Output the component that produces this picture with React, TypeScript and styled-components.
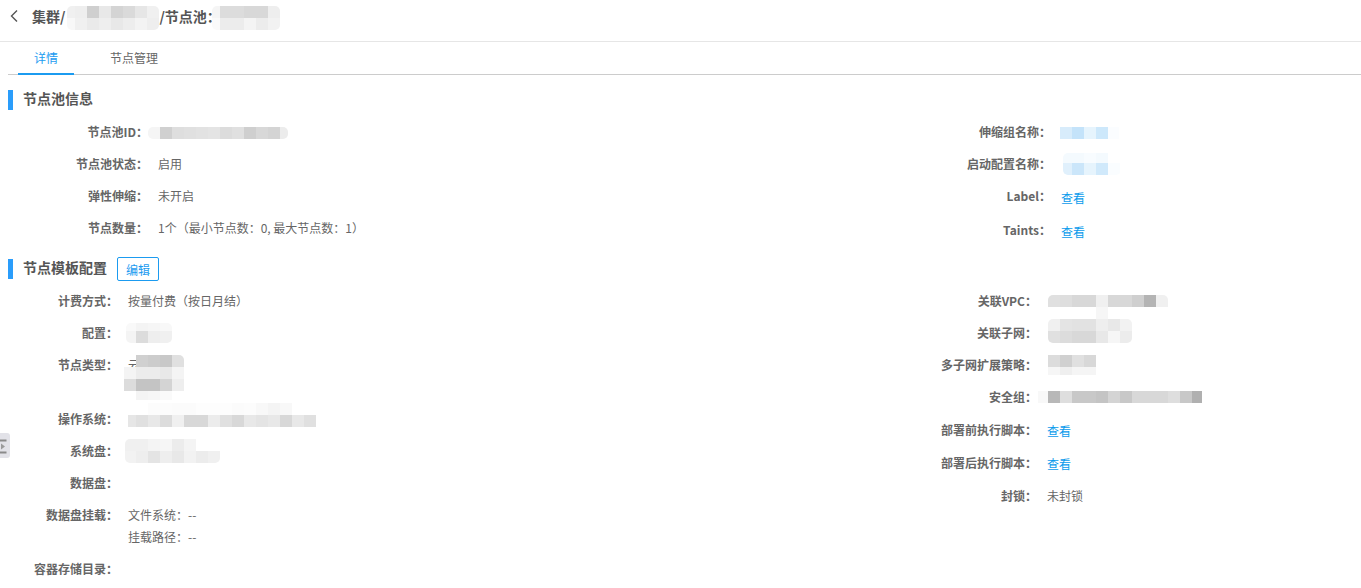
import { FC, ReactNode } from 'react';
import styled, { createGlobalStyle } from 'styled-components';

const GlobalStyle = createGlobalStyle`
  html, body {
    margin: 0;
    padding: 0;
    height: 100%;
    overflow: hidden;
    background: #fff;
  }
  body {
    font-family: "Noto Sans CJK SC", "Noto Sans", "Liberation Sans", sans-serif;
    font-size: 12px;
    color: #666;
  }
`;

type Blur = {
  x: number;
  y: number;
  w: number;
  h: number;
  offX?: number;
  offY?: number;
  flat?: boolean;
  rows: string[][];
};

const Mosaic: FC<Blur> = ({ x, y, w, h, offX = 0, offY = 0, flat, rows }) => (
  <MosaicBox $x={x} $y={y} $w={w} $h={h} $flat={flat}>
    <MosaicInner $offX={offX} $offY={offY}>
      {rows.map((row, i) => (
        <MosaicRow key={i}>
          {row.map((c, j) => (
            <MosaicCell key={j} $c={c} />
          ))}
        </MosaicRow>
      ))}
    </MosaicInner>
  </MosaicBox>
);

const Row: FC<{ label: string; width: number; height?: number; children?: ReactNode }> = ({
  label,
  width,
  height = 32,
  children,
}) => (
  <RowWrap $height={height}>
    <Label $width={width}>{label}：</Label>
    <Value>{children}</Value>
  </RowWrap>
);

const App: FC = () => {
  return (
    <Page>
      <GlobalStyle />
      <Header>
        <BackIcon width="10" height="14" viewBox="0 0 10 14">
          <path d="M8 1.5 2.5 7 8 12.5" fill="none" stroke="#555" strokeWidth="1.4" />
        </BackIcon>
        <Crumb>集群/</Crumb>
        <Hidden $width={94}>
          <Mosaic
            x={2}
            y={-4}
            w={92}
            h={24}
            offX={4}
            rows={[
              ['#f0f0f0', '#eeeeee', '#cfcfcf', '#e8e8e8', '#d4d4d4', '#dadada', '#e6e6e6', '#f0f0f0'],
              ['#f8f8f8', '#f0f0f0', '#eaeaea', '#eeeeee', '#e8e8e8', '#ededed', '#f3f3f3', '#eeeeee'],
            ]}
          />
        </Hidden>
        <Crumb>/节点池：</Crumb>
        <Hidden $width={68}>
          <Mosaic
            x={-9}
            y={-4}
            w={68}
            h={24}
            offX={4}
            rows={[
              ['#f5f5f5', '#dcdcdc', '#dcdcdc', '#d8d8d8', '#d8d8d8', '#eeeeee'],
              ['#fafafa', '#ececec', '#ececec', '#f4f4f4', '#ececec', '#f2f2f2'],
            ]}
          />
        </Hidden>
      </Header>

      <Tabs>
        <Tab $active>详情</Tab>
        <Tab>节点管理</Tab>
      </Tabs>

      <SectionTitle>
        <TitleText>节点池信息</TitleText>
      </SectionTitle>
      <Columns>
        <Column $width={900}>
          <Row label="节点池ID" width={148}>
            <Mosaic
              x={-10}
              y={6}
              w={140}
              h={12}
              rows={[['#f5f5f5', '#d0d0d0', '#dedede', '#e0e0e0', '#e2e2e2', '#e4e4e4', '#dcdcdc', '#e0e0e0', '#cfcfcf', '#d8d8d8', '#d4d4d4', '#ececec']]}
            />
          </Row>
          <Row label="节点池状态" width={148}>启用</Row>
          <Row label="弹性伸缩" width={148}>未开启</Row>
          <Row label="节点数量" width={148}>1个（最小节点数：0, 最大节点数：1）</Row>
        </Column>
        <Column>
          <Row label="伸缩组名称" width={151}>
            <Mosaic
              x={-1}
              y={6}
              w={59}
              h={12}
              flat
              rows={[['#d8ecfb', '#c4e3fa', '#e6f4fd', '#cde8fb', '#fbfdff']]}
            />
          </Row>
          <Row label="启动配置名称" width={151}>
            <Mosaic
              x={2}
              y={0}
              w={58}
              h={22}
              offX={3}
              offY={2}
              rows={[
                ['#f4fafe', '#f4fafe', '#f8fcff', '#f4fafe', '#ffffff'],
                ['#e0f0fc', '#cbe6fa', '#e6f4fd', '#d0e9fb', '#fafdff'],
              ]}
            />
          </Row>
          <Row label="Label" width={151} height={34}>
            <ViewLink>查看</ViewLink>
          </Row>
          <Row label="Taints" width={151} height={34}>
            <ViewLink>查看</ViewLink>
          </Row>
        </Column>
      </Columns>

      <SectionTitle $second>
        <TitleText>节点模板配置</TitleText>
        <EditButton>编辑</EditButton>
      </SectionTitle>
      <Columns>
        <Column $width={900}>
          <Row label="计费方式" width={118}>按量付费（按日月结）</Row>
          <Row label="配置" width={118}>
            <Mosaic
              x={-2}
              y={1}
              w={46}
              h={20}
              offX={2}
              offY={4}
              rows={[
                ['#f9f9f9', '#f4f4f4', '#f6f6f6', '#f8f8f8'],
                ['#f4f4f4', '#dcdcdc', '#eeeeee', '#f0f0f0'],
              ]}
            />
          </Row>
          <Row label="节点类型" width={118} height={54}>
            云
            <Mosaic
              x={-4}
              y={1}
              w={60}
              h={45}
              rows={[
                ['transparent', '#d0d0d0', '#cccccc', '#c8c8c8', '#e0e0e0'],
                ['#f4f4f4', '#ececec', '#ececec', '#e8e8e8', '#f4f4f4'],
                ['#dcdcdc', '#c4c4c4', '#c4c4c4', '#d4d4d4', '#eeeeee'],
                ['transparent', '#f4f4f4', '#f6f6f6', '#fafafa', 'transparent'],
              ]}
            />
          </Row>
          <Row label="操作系统" width={118}>
            <Mosaic
              x={0}
              y={-5}
              w={188}
              h={24}
              offX={4}
              flat
              rows={[
                ['transparent', 'transparent', '#fcfcfc', '#fcfcfc', '#fbfbfb', '#fbfbfb', '#fdfdfd', '#fdfdfd', '#fdfdfd', '#fbfbfb', '#fcfcfc', '#f8f8f8', '#f4f4f4', '#f8f8f8', 'transparent', 'transparent'],
                ['#e6e6e6', '#e0e0e0', '#e8e8e8', '#dcdcdc', '#f0f0f0', '#d8d8d8', '#d8d8d8', '#ececec', '#e0e0e0', '#d8d8d8', '#e8e8e8', '#e4e4e4', '#e8e8e8', '#d8d8d8', '#e8e8e8', '#e0e0e0'],
              ]}
            />
          </Row>
          <Row label="系统盘" width={118}>
            <Mosaic
              x={-3}
              y={-1}
              w={95}
              h={24}
              offX={1}
              rows={[
                ['#f0f0f0', '#f0f0f0', '#f4f4f4', '#f6f6f6', '#ececec', '#f4f4f4', 'transparent', 'transparent'],
                ['#f2f2f2', '#eeeeee', '#e4e4e4', '#eeeeee', '#e8e8e8', '#f2f2f2', '#ececec', '#f0f0f0'],
              ]}
            />
          </Row>
          <Row label="数据盘" width={118} />
          <Row label="数据盘挂载" width={118} height={54}>
            <Lines>
              <span>文件系统：--</span>
              <span>挂载路径：--</span>
            </Lines>
          </Row>
          <Row label="容器存储目录" width={118} />
        </Column>
        <Column>
          <Row label="关联VPC" width={137}>
            <Mosaic
              x={1}
              y={5}
              w={120}
              h={24}
              rows={[
                ['#e0e0e0', '#dedede', '#d8d8d8', '#d8d8d8', '#f0f0f0', '#d8d8d8', '#d8d8d8', '#cfcfcf', '#b4b4b4', '#f0f0f0'],
                ['transparent', 'transparent', 'transparent', 'transparent', '#f6f6f6'],
              ]}
            />
          </Row>
          <Row label="关联子网" width={137}>
            <Mosaic
              x={1}
              y={-3}
              w={84}
              h={24}
              rows={[
                ['#f0f0f0', '#e4e4e4', '#e2e2e2', '#e2e2e2', '#eeeeee', '#e8e8e8', '#f2f2f2'],
                ['#e0e0e0', '#dcdcdc', '#d8d8d8', '#d8d8d8', '#e8e8e8', '#f6f6f6', '#ececec'],
              ]}
            />
          </Row>
          <Row label="多子网扩展策略" width={137}>
            <Mosaic
              x={1}
              y={1}
              w={48}
              h={20}
              flat
              rows={[
                ['#dcdcdc', '#d0d0d0', '#e0e0e0', '#d8d8d8'],
                ['#f6f6f6', '#efefef', '#f5f5f5', '#f5f5f5'],
              ]}
            />
          </Row>
          <Row label="安全组" width={137} height={33}>
            <Mosaic
              x={-9}
              y={5}
              w={164}
              h={12}
              offX={2}
              flat
              rows={[['#f8f8f8', '#b8b8b8', '#dedede', '#c8c8c8', '#c8c8c8', '#c4c4c4', '#d4d4d4', '#c8c8c8', '#d8d8d8', '#d8d8d8', '#d8d8d8', '#dedede', '#c8c8c8', '#b0b0b0']]}
            />
          </Row>
          <Row label="部署前执行脚本" width={137} height={33}>
            <ViewLink $high>查看</ViewLink>
          </Row>
          <Row label="部署后执行脚本" width={137} height={33}>
            <ViewLink $high>查看</ViewLink>
          </Row>
          <Row label="封锁" width={137}>未封锁</Row>
        </Column>
      </Columns>

      <SideHandle>
        <svg width="10" height="25" viewBox="0 0 10 25">
          <path d="M0 7.5h6.5M0 19.5h6.5" stroke="#8a8a8a" strokeWidth="2" />
          <path d="M1 10.5 5 13.5 1 16.5z" fill="#9a9a9a" />
        </svg>
      </SideHandle>
    </Page>
  );
};

export default App;

const Page = styled.div`
  position: relative;
  width: 1361px;
  height: 588px;
  overflow: hidden;
`;

const Header = styled.div`
  display: flex;
  align-items: center;
  height: 42px;
  padding: 0 0 9px 9px;
  box-sizing: border-box;
  border-bottom: 1px solid #e6e6e6;
`;

const BackIcon = styled.svg`
  flex: none;
  margin-right: 13px;
`;

const Crumb = styled.span`
  font-size: 14px;
  font-weight: 700;
  color: #555;
`;

const Hidden = styled.span<{ $width: number }>`
  position: relative;
  flex: none;
  width: ${(p) => p.$width}px;
  height: 12px;
`;

const Tabs = styled.div`
  display: flex;
  height: 33px;
  box-sizing: border-box;
  margin-left: 8px;
  padding-left: 10px;
  border-bottom: 1px solid #ccc;
`;

const Tab = styled.div<{ $active?: boolean }>`
  padding: 0 16px;
  margin-right: 20px;
  height: 33px;
  box-sizing: border-box;
  line-height: 32px;
  color: ${(p) => (p.$active ? '#1b9bf0' : '#666')};
  border-bottom: 2px solid ${(p) => (p.$active ? '#1b9bf0' : 'transparent')};
`;

const SectionTitle = styled.div<{ $second?: boolean }>`
  display: flex;
  align-items: center;
  height: 20px;
  margin-top: ${(p) => (p.$second ? 11 : 15)}px;
  margin-left: 8px;
  padding-left: 5px;
  border-left: 5px solid #2a9dfb;
`;

const TitleText = styled.span`
  margin-left: 5px;
  padding-bottom: 4px;
  font-size: 14px;
  font-weight: 700;
  color: #555;
`;

const EditButton = styled.button`
  flex: none;
  width: 42px;
  height: 24px;
  margin-left: 10px;
  padding: 0;
  background: #fff;
  border: 1px solid #1b9bf0;
  border-radius: 2px;
  color: #1b9bf0;
  font: inherit;
`;

const Columns = styled.div`
  display: flex;
  margin-top: 6px;
`;

const Column = styled.div<{ $width?: number }>`
  display: flex;
  flex-direction: column;
  flex: ${(p) => (p.$width ? `0 0 ${p.$width}px` : '1')};
`;

const RowWrap = styled.div<{ $height: number }>`
  display: flex;
  height: ${(p) => p.$height}px;
  line-height: 32px;
`;

const Label = styled.div<{ $width: number }>`
  flex: none;
  width: ${(p) => p.$width}px;
  margin-right: 10px;
  text-align: right;
  font-weight: 700;
  color: #666;
  white-space: nowrap;
`;

const Value = styled.div`
  position: relative;
  flex: 1;
  height: 22px;
  margin-top: 5px;
  line-height: 22px;
  color: #666;
  white-space: nowrap;
`;

const Lines = styled.div`
  display: flex;
  flex-direction: column;
`;

const ViewLink = styled.a<{ $high?: boolean }>`
  position: relative;
  top: ${(p) => (p.$high ? 1 : 2)}px;
  color: #0a9bec;
  cursor: pointer;
`;

const MosaicBox = styled.div<{ $x: number; $y: number; $w: number; $h: number; $flat?: boolean }>`
  position: absolute;
  left: ${(p) => p.$x}px;
  top: ${(p) => p.$y}px;
  width: ${(p) => p.$w}px;
  height: ${(p) => p.$h}px;
  overflow: hidden;
  border-radius: ${(p) => (p.$flat ? '0' : '5px')};
`;

const MosaicInner = styled.div<{ $offX: number; $offY: number }>`
  margin-left: ${(p) => -p.$offX}px;
  margin-top: ${(p) => -p.$offY}px;
`;

const MosaicRow = styled.div`
  display: flex;
  height: 12px;
`;

const MosaicCell = styled.div<{ $c: string }>`
  flex: none;
  width: 12px;
  height: 12px;
  background: ${(p) => p.$c};
`;

const SideHandle = styled.div`
  position: absolute;
  left: 0;
  top: 433px;
  width: 10px;
  height: 25px;
  display: flex;
  background: #e2e2e8;
  border-radius: 0 3px 3px 0;
`;
